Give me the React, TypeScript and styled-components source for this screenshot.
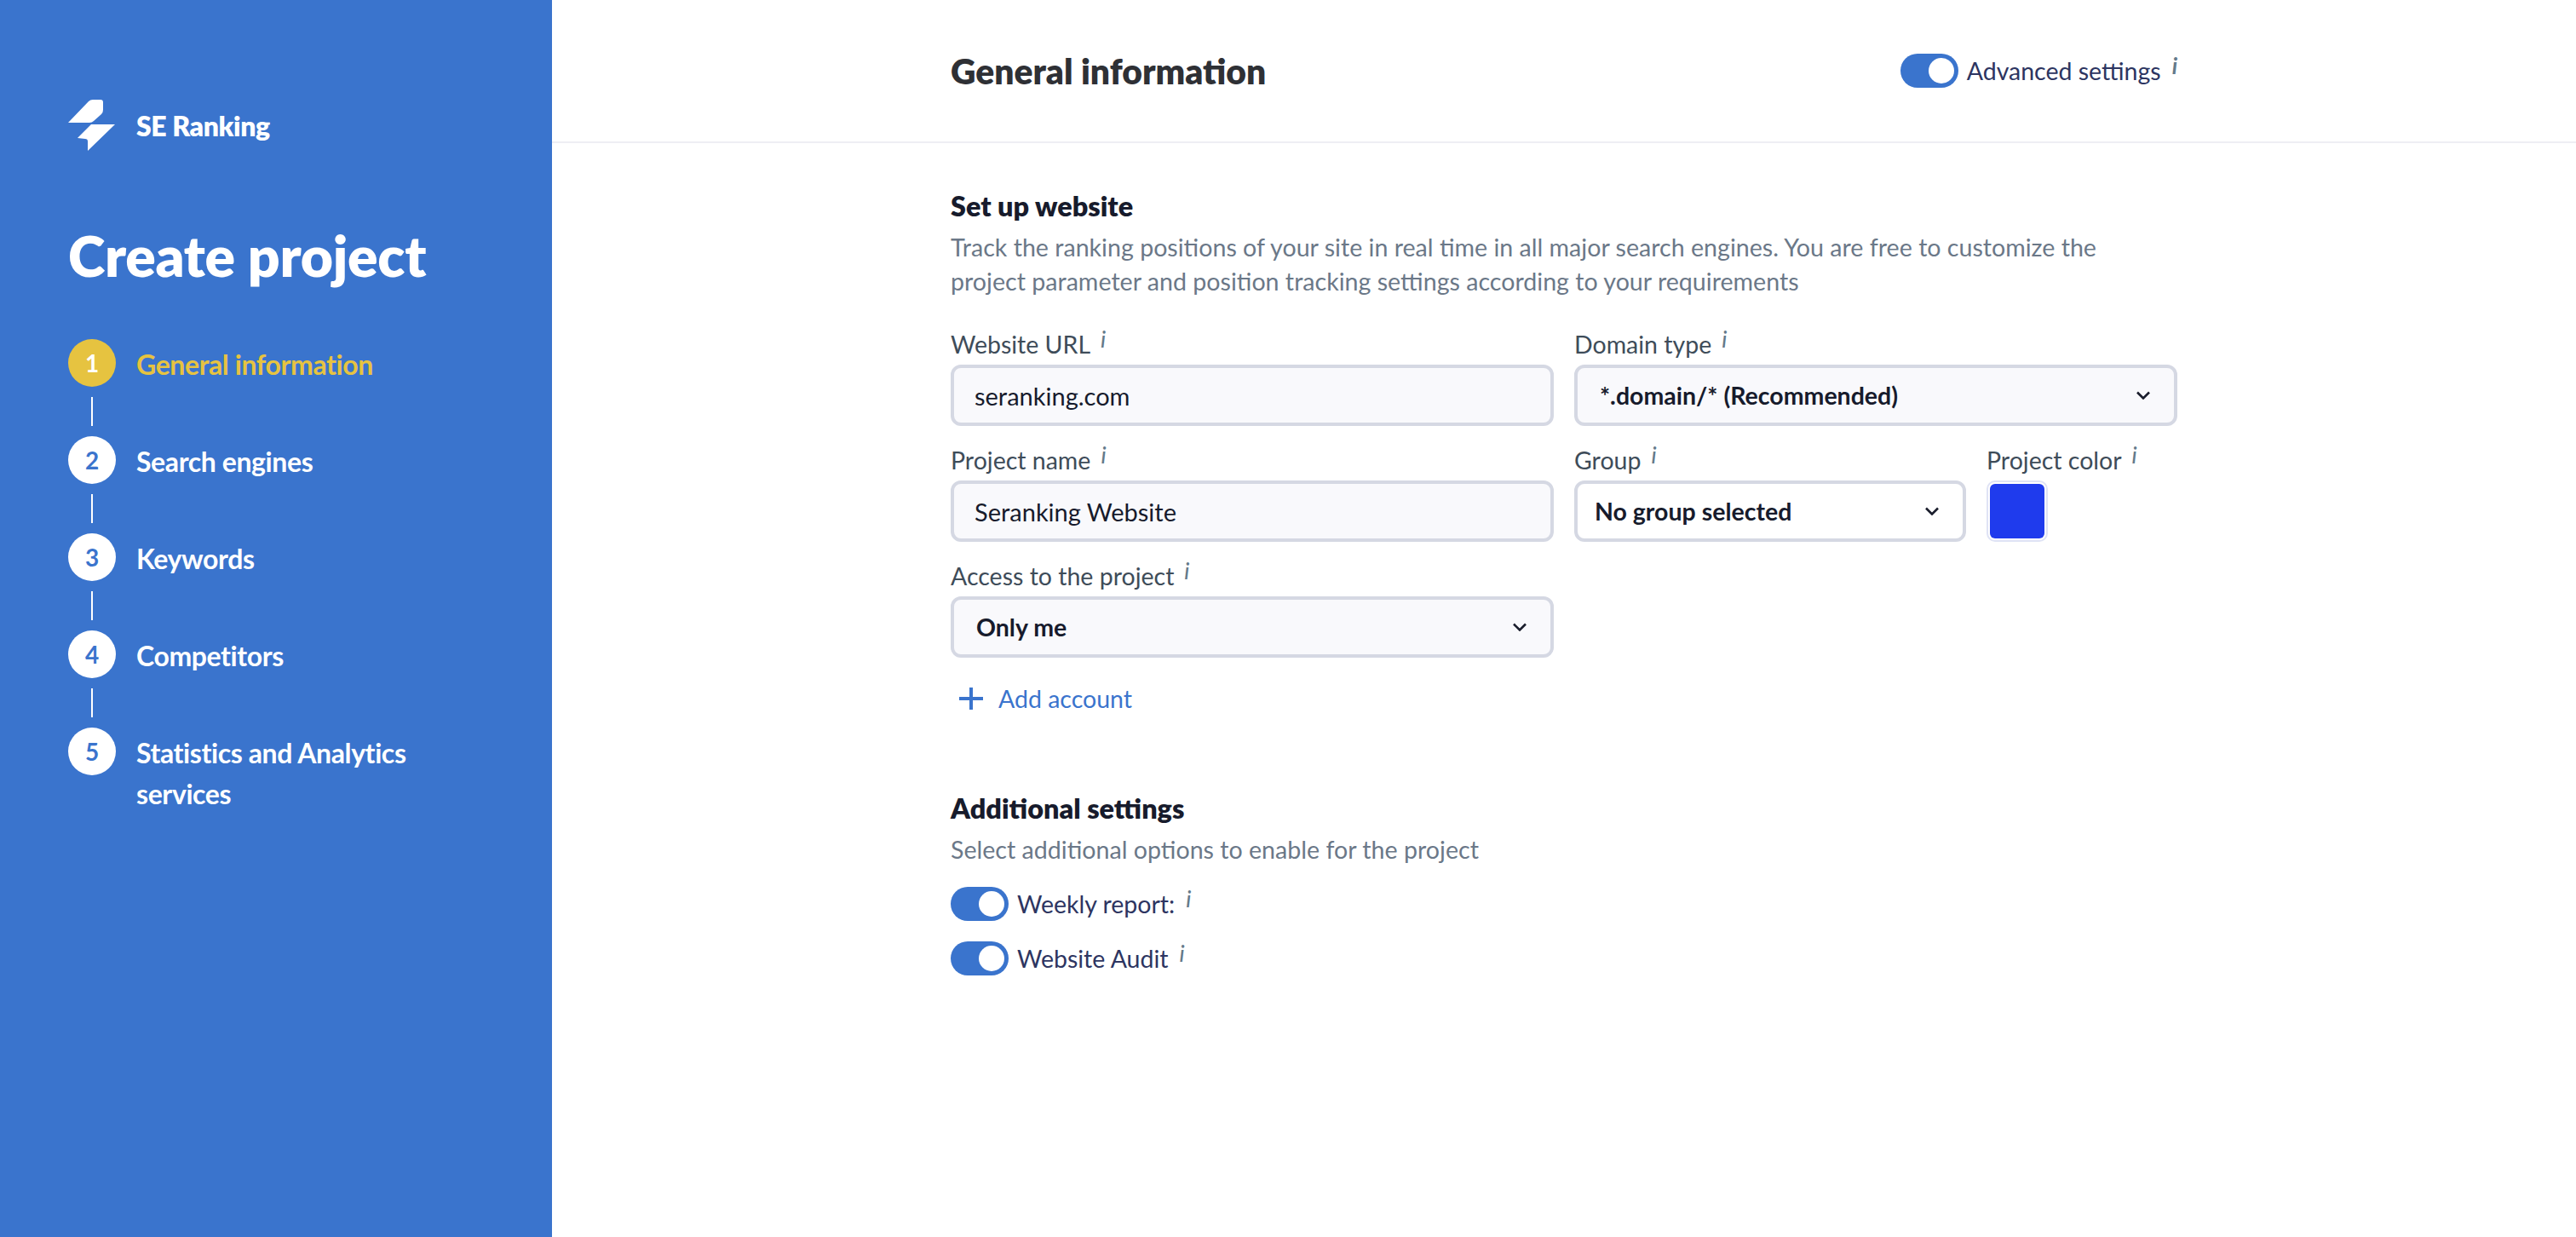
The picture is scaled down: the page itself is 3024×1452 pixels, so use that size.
import styled, { createGlobalStyle } from 'styled-components'

const steps = [
  { n: 1, label: 'General information', active: true },
  { n: 2, label: 'Search engines' },
  { n: 3, label: 'Keywords' },
  { n: 4, label: 'Competitors' },
  { n: 5, label: 'Statistics and Analytics services' },
]

function App() {
  return (
    <Page>
      <GlobalStyle />
      <Sidebar>
        <Brand>
          <Logo />
          <BrandName>SE Ranking</BrandName>
        </Brand>
        <SideTitle>Create project</SideTitle>
        <StepList>
          {steps.map((step, i) => (
            <Step key={step.n}>
              <Marker>
                <Circle $active={step.active}>{step.n}</Circle>
                {i < steps.length - 1 && <Connector />}
              </Marker>
              <StepLabel $active={step.active}>{step.label}</StepLabel>
            </Step>
          ))}
        </StepList>
      </Sidebar>
      <Main>
        <Header>
          <HeaderInner>
            <PageTitle>General information</PageTitle>
            <ToggleRow>
              <Toggle />
              <ToggleText>Advanced settings</ToggleText>
              <Info $bold>i</Info>
            </ToggleRow>
          </HeaderInner>
        </Header>
        <Content>
          <SectionTitle>Set up website</SectionTitle>
          <Description>
            Track the ranking positions of your site in real time in all major search engines. You
            are free to customize the project parameter and position tracking settings according to
            your requirements
          </Description>
          <FormGrid>
            <Field>
              <Label>
                Website URL<Info>i</Info>
              </Label>
              <TextBox>seranking.com</TextBox>
            </Field>
            <Field>
              <Label>
                Domain type<Info>i</Info>
              </Label>
              <Select>
                <span>*.domain/* (Recommended)</span>
                <Chevron />
              </Select>
            </Field>
            <Field>
              <Label>
                Project name<Info>i</Info>
              </Label>
              <TextBox>Seranking Website</TextBox>
            </Field>
            <GroupRow>
              <Field>
                <Label>
                  Group<Info>i</Info>
                </Label>
                <Select $white $tight>
                  <span>No group selected</span>
                  <Chevron />
                </Select>
              </Field>
              <Field>
                <Label>
                  Project color<Info>i</Info>
                </Label>
                <Swatch />
              </Field>
            </GroupRow>
            <Field>
              <Label>
                Access to the project<Info>i</Info>
              </Label>
              <Select>
                <span>Only me</span>
                <Chevron />
              </Select>
            </Field>
          </FormGrid>
          <AddAccount>
            <PlusIcon />
            Add account
          </AddAccount>
          <SectionTitle $spaced>Additional settings</SectionTitle>
          <Description>Select additional options to enable for the project</Description>
          <Options>
            <ToggleRow>
              <Toggle />
              <ToggleText>Weekly report:</ToggleText>
              <Info>i</Info>
            </ToggleRow>
            <ToggleRow>
              <Toggle />
              <ToggleText>Website Audit</ToggleText>
              <Info>i</Info>
            </ToggleRow>
          </Options>
        </Content>
      </Main>
    </Page>
  )
}

const Logo = () => (
  <svg width="55" height="60" viewBox="0 0 55 60" fill="#fff">
    <path d="M0 27 L24 2 Q26 0 29 0 L38 0 Q41 0 41 3 L41 12 Q41 15 39 17 L30 25 Q28 27 25 27 Z" />
    <path d="M55 29 L27 29 L11 45 L20 46 Q23 46 23 49 L23 60 Z" />
  </svg>
)

const Chevron = () => (
  <svg width="16" height="10" viewBox="0 0 16 10" fill="none" stroke="#1a1d2c" strokeWidth="2.6">
    <path d="M1 1.5 L8 8.5 L15 1.5" />
  </svg>
)

const PlusIcon = () => (
  <svg width="28" height="28" viewBox="0 0 28 28" fill="none" stroke="#3a74cd" strokeWidth="4">
    <path d="M14 1 V27 M0 14 H28" />
  </svg>
)

export default App

const GlobalStyle = createGlobalStyle`
  html, body {
    margin: 0;
    padding: 0;
    background: #fff;
  }
  body {
    font-family: 'Lato', 'Liberation Sans', sans-serif;
  }
`

const Page = styled.div`
  display: flex;
  width: 3024px;
  height: 1452px;
  overflow: hidden;
`

const Sidebar = styled.aside`
  flex: none;
  width: 648px;
  box-sizing: border-box;
  padding: 117px 80px 0;
  background: #3a74cd;
  color: #fff;
`

const Brand = styled.div`
  display: flex;
  align-items: center;
  gap: 25px;
  height: 60px;
`

const BrandName = styled.div`
  padding-top: 2px;
  font-size: 32px;
  font-weight: 800;
  letter-spacing: -0.4px;
  line-height: 40px;
`

const SideTitle = styled.h1`
  margin: 83px 0 0;
  font-size: 66px;
  font-weight: 800;
  letter-spacing: -0.3px;
  line-height: 80px;
`

const StepList = styled.div`
  display: flex;
  flex-direction: column;
  margin-top: 58px;
`

const Step = styled.div`
  display: flex;
  gap: 24px;
`

const Marker = styled.div`
  display: flex;
  flex: none;
  flex-direction: column;
  align-items: center;
  width: 56px;
`

const Circle = styled.div<{ $active?: boolean }>`
  display: flex;
  align-items: center;
  justify-content: center;
  width: 56px;
  height: 56px;
  border-radius: 50%;
  background: ${(p) => (p.$active ? '#e6c340' : '#fff')};
  color: ${(p) => (p.$active ? '#fff' : '#3a74cd')};
  font-size: 28px;
  font-weight: 700;
`

const Connector = styled.div`
  width: 2px;
  height: 34px;
  margin: 12px 0;
  background: #fff;
`

const StepLabel = styled.div<{ $active?: boolean }>`
  width: 400px;
  padding-top: 6px;
  color: ${(p) => (p.$active ? '#e6c340' : '#fff')};
  font-size: 32px;
  font-weight: 700;
  letter-spacing: -0.4px;
  line-height: 48px;
`

const Main = styled.main`
  flex: 1;
  min-width: 0;
`

const Header = styled.header`
  height: 168px;
  box-sizing: border-box;
  border-bottom: 2px solid #eeeef4;
`

const HeaderInner = styled.div`
  display: flex;
  align-items: center;
  justify-content: space-between;
  width: 1440px;
  height: 166px;
  margin: 0 auto;
`

const PageTitle = styled.h2`
  margin: 0;
  color: #2e3035;
  font-size: 40.8px;
  font-weight: 800;
`

const ToggleRow = styled.div`
  display: flex;
  align-items: center;
  gap: 10px;
`

const Toggle = styled.span`
  display: flex;
  flex: none;
  justify-content: flex-end;
  align-items: center;
  width: 68px;
  height: 40px;
  box-sizing: border-box;
  padding: 0 5px;
  border-radius: 20px;
  background: #3a74cd;

  &::after {
    content: '';
    width: 30px;
    height: 30px;
    border-radius: 50%;
    background: #fff;
  }
`

const ToggleText = styled.span`
  color: #2d3561;
  font-size: 28.5px;
  line-height: 40px;
`

const Info = styled.i<{ $bold?: boolean }>`
  align-self: flex-start;
  margin-left: 3px;
  color: #647a8a;
  font-size: 26px;
  font-style: italic;
  font-weight: ${(p) => (p.$bold ? 700 : 500)};
  line-height: 28px;
`

const Content = styled.div`
  width: 1440px;
  margin: 0 auto;
  padding-top: 54px;
`

const SectionTitle = styled.h3<{ $spaced?: boolean }>`
  margin: ${(p) => (p.$spaced ? '89px' : '0')} 0 0;
  color: #171b2c;
  font-size: 32.4px;
  font-weight: 800;
  line-height: 40px;
`

const Description = styled.p`
  width: 1400px;
  margin: 8px 0 0;
  color: #6b7888;
  font-size: 28.6px;
  line-height: 40px;
`

const FormGrid = styled.div`
  display: grid;
  grid-template-columns: 708px 708px;
  column-gap: 24px;
  margin-top: 14px;
`

const Field = styled.div`
  display: flex;
  flex-direction: column;
`

const GroupRow = styled.div`
  display: grid;
  grid-template-columns: 460px 1fr;
  column-gap: 24px;
`

const Label = styled.div`
  display: flex;
  gap: 9px;
  height: 64px;
  padding-top: 20px;
  box-sizing: border-box;
  color: #3e4c59;
  font-size: 28.5px;
  line-height: 40px;
  white-space: nowrap;
`

const TextBox = styled.div`
  display: flex;
  align-items: center;
  height: 72px;
  box-sizing: border-box;
  padding: 0 24px;
  border: 4px solid #d5d8e3;
  border-radius: 12px;
  background: #f9f9fc;
  color: #171b2c;
  font-size: 29px;
`

const Select = styled.div<{ $white?: boolean; $tight?: boolean }>`
  display: flex;
  align-items: center;
  justify-content: space-between;
  height: 72px;
  box-sizing: border-box;
  padding: 0 28px 0 ${(p) => (p.$tight ? '20px' : '26px')};
  border: 4px solid #d5d8e3;
  border-radius: 12px;
  background: ${(p) => (p.$white ? '#fff' : '#f9f9fc')};
  color: #171b2c;
  font-size: 28.5px;
  font-weight: 700;
`

const Swatch = styled.div`
  width: 72px;
  height: 72px;
  box-sizing: border-box;
  border: 2px solid #dfe3f5;
  border-radius: 10px;
  background: #1f3bed;
  background-clip: content-box;
  padding: 2px;
`

const AddAccount = styled.div`
  display: flex;
  align-items: center;
  gap: 18px;
  margin-top: 28px;
  padding-left: 10px;
  color: #3a74cd;
  font-size: 28.5px;
  line-height: 40px;
`

const Options = styled.div`
  display: flex;
  flex-direction: column;
  gap: 24px;
  margin-top: 24px;
`
